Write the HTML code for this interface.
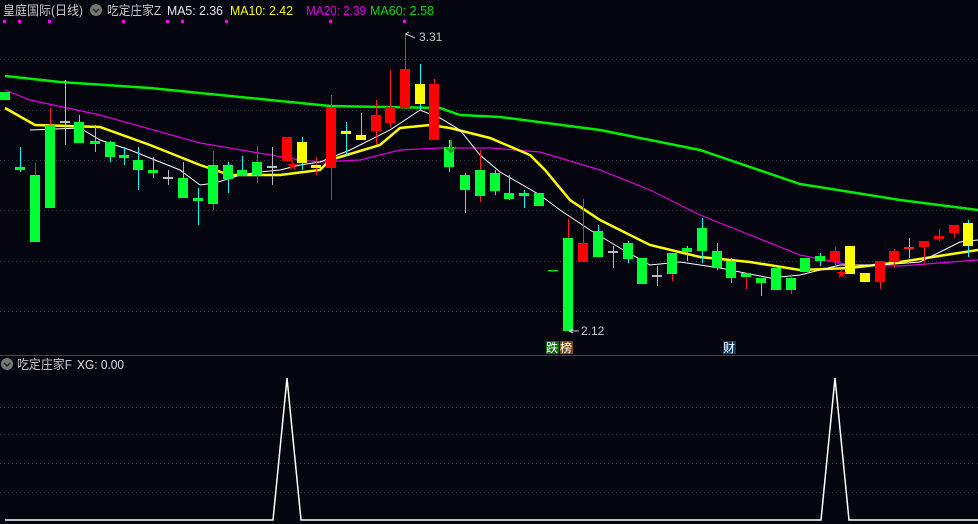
<!DOCTYPE html>
<html><head><meta charset="utf-8"><style>
html,body{margin:0;padding:0;background:#05050f;width:978px;height:524px;overflow:hidden}
svg{display:block}
text{font-family:"Liberation Sans","Noto Sans CJK SC",sans-serif}
</style></head><body>
<svg width="978" height="524" viewBox="0 0 978 524" xmlns="http://www.w3.org/2000/svg">
<rect width="978" height="524" fill="#05050f"/>
<g stroke="#3a3a3a" stroke-dasharray="1,3" stroke-width="1">
<line x1="0" y1="59.5" x2="978" y2="59.5"/><line x1="0" y1="110.5" x2="978" y2="110.5"/>
<line x1="0" y1="160.5" x2="978" y2="160.5"/><line x1="0" y1="210.5" x2="978" y2="210.5"/>
<line x1="0" y1="261.5" x2="978" y2="261.5"/><line x1="0" y1="311.5" x2="978" y2="311.5"/>
<line x1="0" y1="407.5" x2="978" y2="407.5"/><line x1="0" y1="434.5" x2="978" y2="434.5"/>
<line x1="0" y1="463.5" x2="978" y2="463.5"/><line x1="0" y1="492.5" x2="978" y2="492.5"/>
</g>
<line x1="0" y1="355.5" x2="978" y2="355.5" stroke="#444" stroke-width="1"/>
<!-- header -->
<text x="3" y="15" font-size="13" fill="#c8c8c8" textLength="80" lengthAdjust="spacingAndGlyphs">皇庭国际(日线)</text>
<circle cx="96" cy="10" r="6" fill="#777"/><path d="M93 9l3 3 3-3" stroke="#222" stroke-width="1.5" fill="none"/>
<text x="107" y="15" font-size="13" fill="#c8c8c8" textLength="54" lengthAdjust="spacingAndGlyphs">吃定庄家Z</text>
<text x="167" y="15" font-size="13" fill="#e8e8e8" textLength="56" lengthAdjust="spacingAndGlyphs">MA5: 2.36</text>
<text x="230" y="15" font-size="13" fill="#ffff00" textLength="63" lengthAdjust="spacingAndGlyphs">MA10: 2.42</text>
<text x="306" y="15" font-size="13" fill="#e000e0" textLength="60" lengthAdjust="spacingAndGlyphs">MA20: 2.39</text>
<text x="370" y="15" font-size="13" fill="#00e000" textLength="64" lengthAdjust="spacingAndGlyphs">MA60: 2.58</text>
<g fill="#ff00ff"><rect x="3" y="20" width="3" height="3"/><rect x="18" y="20" width="3" height="3"/><rect x="48" y="20" width="3" height="3"/><rect x="122" y="20" width="3" height="3"/><rect x="166" y="20" width="3" height="3"/><rect x="181" y="20" width="3" height="3"/><rect x="225" y="20" width="3" height="3"/><rect x="329" y="20" width="3" height="3"/><rect x="403" y="20" width="3" height="3"/></g>
<!-- MA lines -->
<polyline fill="none" stroke="#00ee00" stroke-width="2.5" points="5,76 60,82 150,88 300,103 330,106 440,108 460,115 500,117 600,130 700,150 800,184 900,200 978,210"/>
<polyline fill="none" stroke="#e000e0" stroke-width="1.2" points="5,90 30,100 100,115 200,143 300,160 320,162 360,160 400,150 440,148 490,148 540,152 600,170 650,190 700,215 750,235 800,255 850,265 900,266 978,260"/>
<polyline fill="none" stroke="#ffff00" stroke-width="2.5" points="5,108 35,125 100,127 150,145 200,165 230,175 280,175 320,170 330,160 380,145 400,128 430,125 450,128 490,138 530,155 545,170 570,200 600,220 650,245 700,257 750,262 800,270 850,268 900,262 978,250"/>
<polyline fill="none" stroke="#ffffff" stroke-width="1" points="30,130 80,128 100,140 130,150 180,170 200,185 215,183 240,175 260,172 280,170 300,165 320,162 330,158 350,150 390,130 420,110 440,118 460,130 480,155 500,172 540,195 560,210 590,230 620,248 650,265 680,262 720,268 770,278 800,275 840,265 880,265 920,262 960,242 978,240"/>
<!-- candles -->
<g stroke-width="1">
<g stroke="#00ffff"><line x1="20.5" y1="147" x2="20.5" y2="172"/><line x1="79.5" y1="115" x2="79.5" y2="143"/><line x1="95.5" y1="125" x2="95.5" y2="152"/><line x1="110.5" y1="141" x2="110.5" y2="162"/><line x1="124.5" y1="147" x2="124.5" y2="165"/><line x1="138.5" y1="147" x2="138.5" y2="190"/><line x1="153.5" y1="157" x2="153.5" y2="178"/><line x1="183.5" y1="162" x2="183.5" y2="198"/><line x1="198.5" y1="188" x2="198.5" y2="225"/><line x1="228.5" y1="162" x2="228.5" y2="193"/><line x1="242.5" y1="156" x2="242.5" y2="176"/><line x1="449.5" y1="140" x2="449.5" y2="172"/><line x1="465.5" y1="173" x2="465.5" y2="213"/><line x1="495.5" y1="170" x2="495.5" y2="195"/><line x1="509.5" y1="175" x2="509.5" y2="200"/><line x1="524.5" y1="190" x2="524.5" y2="208"/><line x1="598.5" y1="225" x2="598.5" y2="257"/><line x1="613.5" y1="246" x2="613.5" y2="268"/><line x1="628.5" y1="241" x2="628.5" y2="263"/><line x1="702.5" y1="218" x2="702.5" y2="263"/><line x1="717.5" y1="243" x2="717.5" y2="270"/><line x1="731.5" y1="258" x2="731.5" y2="283"/><line x1="761.5" y1="278" x2="761.5" y2="296"/><line x1="820.5" y1="253" x2="820.5" y2="266"/><line x1="968.5" y1="220" x2="968.5" y2="257"/><line x1="346.5" y1="122" x2="346.5" y2="155"/><line x1="361.5" y1="113" x2="361.5" y2="140"/><line x1="420.5" y1="64" x2="420.5" y2="110"/><line x1="302.5" y1="137" x2="302.5" y2="170"/></g>
<g stroke="#ff2020"><line x1="35.5" y1="163" x2="35.5" y2="242"/><line x1="50.5" y1="108" x2="50.5" y2="208"/><line x1="213.5" y1="151" x2="213.5" y2="210"/><line x1="257.5" y1="146" x2="257.5" y2="183"/><line x1="331.5" y1="95" x2="331.5" y2="200"/><line x1="376.5" y1="100" x2="376.5" y2="145"/><line x1="390.5" y1="70" x2="390.5" y2="127"/><line x1="405.5" y1="33" x2="405.5" y2="108"/><line x1="434.5" y1="79" x2="434.5" y2="140"/><line x1="480.5" y1="150" x2="480.5" y2="202"/><line x1="568.5" y1="219" x2="568.5" y2="331"/><line x1="583.5" y1="199" x2="583.5" y2="262"/><line x1="672.5" y1="253" x2="672.5" y2="281"/><line x1="746.5" y1="273" x2="746.5" y2="289"/><line x1="791.5" y1="274" x2="791.5" y2="294"/><line x1="835.5" y1="247" x2="835.5" y2="266"/><line x1="880.5" y1="261" x2="880.5" y2="289"/><line x1="894.5" y1="249" x2="894.5" y2="268"/><line x1="924.5" y1="241" x2="924.5" y2="265"/><line x1="939.5" y1="229" x2="939.5" y2="241"/><line x1="954.5" y1="225" x2="954.5" y2="238"/><line x1="316.5" y1="157" x2="316.5" y2="175"/></g>
<g stroke="#bbbbbb"><line x1="65.5" y1="80" x2="65.5" y2="145"/><line x1="168.5" y1="170" x2="168.5" y2="185"/><line x1="272.5" y1="147" x2="272.5" y2="185"/><line x1="657.5" y1="266" x2="657.5" y2="286"/><line x1="909.5" y1="238" x2="909.5" y2="258"/><line x1="687.5" y1="246" x2="687.5" y2="261"/></g>
</g>
<g fill="#00ff33">
<rect x="0" y="92" width="10" height="8"/><rect x="15" y="167" width="10" height="3"/><rect x="30" y="175" width="10" height="67"/><rect x="45" y="125" width="10" height="83"/><rect x="74" y="122" width="10" height="21"/><rect x="90" y="141" width="10" height="3"/><rect x="105" y="142" width="10" height="15"/><rect x="119" y="155" width="10" height="3"/><rect x="133" y="160" width="10" height="10"/><rect x="148" y="170" width="10" height="3"/><rect x="178" y="178" width="10" height="20"/><rect x="193" y="198" width="10" height="3"/><rect x="208" y="165" width="10" height="39"/><rect x="223" y="165" width="10" height="14"/><rect x="237" y="170" width="10" height="6"/><rect x="252" y="162" width="10" height="13"/><rect x="444" y="147" width="10" height="20"/><rect x="460" y="175" width="10" height="15"/><rect x="475" y="170" width="10" height="26"/><rect x="490" y="173" width="10" height="18"/><rect x="504" y="193" width="10" height="6"/><rect x="519" y="193" width="10" height="3"/><rect x="534" y="193" width="10" height="13"/><rect x="563" y="238" width="10" height="93"/><rect x="593" y="231" width="10" height="26"/><rect x="623" y="243" width="10" height="16"/><rect x="637" y="258" width="10" height="26"/><rect x="667" y="253" width="10" height="21"/><rect x="682" y="248" width="10" height="4"/><rect x="697" y="228" width="10" height="23"/><rect x="712" y="251" width="10" height="17"/><rect x="726" y="261" width="10" height="17"/><rect x="741" y="273" width="10" height="4"/><rect x="756" y="278" width="10" height="5"/><rect x="771" y="268" width="10" height="22"/><rect x="786" y="278" width="10" height="12"/><rect x="800" y="258" width="10" height="14"/><rect x="815" y="256" width="10" height="5"/>
</g>
<g fill="#bbbbbb"><rect x="60" y="121" width="10" height="2"/><rect x="163" y="177" width="10" height="2"/><rect x="267" y="166" width="10" height="2"/><rect x="652" y="275" width="10" height="2"/><rect x="608" y="251" width="10" height="2"/><rect x="548" y="270" width="10" height="1.5" fill="#00dd33"/><rect x="904" y="247" width="10" height="2" fill="#ff2020"/></g>
<g fill="#ff0000">
<rect x="282" y="137" width="10" height="24"/><rect x="326" y="107" width="10" height="61"/><rect x="371" y="115" width="10" height="16"/><rect x="385" y="107" width="10" height="16"/><rect x="400" y="69" width="10" height="39"/><rect x="429" y="84" width="10" height="56"/><rect x="578" y="243" width="10" height="19"/><rect x="830" y="251" width="10" height="11"/><rect x="875" y="261" width="10" height="21"/><rect x="889" y="251" width="10" height="11"/><rect x="919" y="241" width="10" height="6"/><rect x="934" y="236" width="10" height="3"/><rect x="949" y="225" width="10" height="8"/>
</g>
<g fill="#ffff00">
<rect x="297" y="142" width="10" height="21"/><rect x="311" y="165" width="10" height="3"/><rect x="341" y="131" width="10" height="3"/><rect x="356" y="135" width="10" height="5"/><rect x="415" y="84" width="10" height="20"/><rect x="845" y="246" width="10" height="28"/><rect x="860" y="273" width="10" height="9"/><rect x="963" y="223" width="10" height="23"/>
</g>
<text x="287" y="169" font-size="11" fill="#ff0000">★</text>
<text x="836" y="277" font-size="11" fill="#ff0000">★</text>
<path d="M451 140 l0 12 M446 147 l5 5 5-5" stroke="#00aa00" stroke-width="2" fill="none"/>
<!-- labels -->
<path d="M406 34 l3 -2 M406 34 l9 4" stroke="#ccc" stroke-width="1" fill="none"/>
<text x="419" y="41" font-size="12" fill="#c8c8c8">3.31</text>
<path d="M569 331 h10 M569 331 l4 -2 M569 331 l4 2" stroke="#ccc" stroke-width="1" fill="none"/>
<text x="581" y="335" font-size="12" fill="#c8c8c8">2.12</text>
<rect x="546" y="341" width="13" height="13" fill="#0a6a0a"/><text x="546" y="352" font-size="12" fill="#fff">跌</text>
<rect x="560" y="341" width="13" height="13" fill="#7a4a10"/><text x="560" y="352" font-size="12" fill="#fff">榜</text>
<rect x="723" y="341" width="13" height="13" fill="#0a3a6a"/><text x="723" y="352" font-size="12" fill="#fff">财</text>
<!-- lower pane -->
<circle cx="7" cy="364" r="6" fill="#777"/><path d="M4 363l3 3 3-3" stroke="#222" stroke-width="1.5" fill="none"/>
<text x="17" y="369" font-size="13" fill="#c8c8c8" textLength="55" lengthAdjust="spacingAndGlyphs">吃定庄家F</text>
<text x="77" y="369" font-size="13" fill="#e0e0e0" textLength="47" lengthAdjust="spacingAndGlyphs">XG: 0.00</text>
<polyline fill="none" stroke="#ffffff" stroke-width="1.5" points="5,520 273,520 287,378 301,520 821,520 835,378 849,520 978,520"/>
</svg>
</body></html>
